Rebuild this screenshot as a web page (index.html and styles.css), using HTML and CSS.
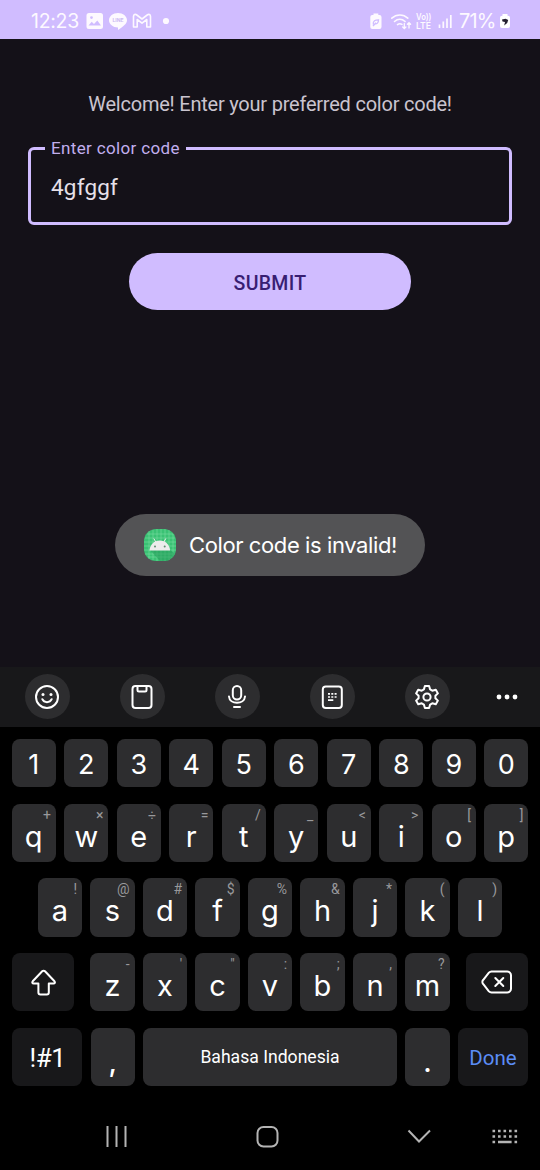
FILE: index.html
```html
<!DOCTYPE html>
<html lang="en">
<head>
<meta charset="utf-8">
<title>Color code</title>
<link rel="stylesheet" href="styles.css">
</head>
<body>
<div class="phone">
  <header class="status">
    <span class="clock">12:23</span>
    <svg class="status-left" width="90" height="24" viewBox="83 9 90 24">
      <path fill="#fdf9ff" fill-rule="evenodd" d="M89 13h11.500a2.500 2.500 0 0 1 2.500 2.500v11a2.500 2.500 0 0 1-2.500 2.500H89a2.500 2.500 0 0 1-2.500-2.500v-11A2.500 2.500 0 0 1 89 13zM88.500 25.500h12.500l-3.700-5-3.300 3.500-2.300-2.300zM91.500 16.200a1.400 1.400 0 1 0 0 2.800 1.400 1.400 0 0 0 0-2.800z"/>
      <path fill="#fdf9ff" d="M118 13c5 0 9 3.200 9 7.200 0 3.300-3.700 6.400-9 9.800v-2.600c-5 0-9-3.200-9-7.200s4-7.200 9-7.200z"/>
      <text x="118" y="22.300" class="line-word" text-anchor="middle">LINE</text>
      <path fill="none" stroke="#fdf9ff" stroke-width="1.600" stroke-linejoin="round" d="M133.500 27V16.500c0-2 1.700-2.700 3.300-1.500l5.200 4 5.200-4c1.600-1.200 3.300-.5 3.300 1.500V27h-3.700v-7.500l-4.800 3.700-4.800-3.700V27z"/>
      <circle cx="166" cy="21" r="3.100" fill="#fdf9ff"/>
    </svg>
    <svg class="status-right" width="88" height="24" viewBox="368 9 88 24">
      <path fill="#fdf9ff" d="M373.500 13.500h4.800v1.600h1.200a2 2 0 0 1 2 2V27a2 2 0 0 1-2 2h-7.200a2 2 0 0 1-2-2v-9.900a2 2 0 0 1 2-2h1.200z"/>
      <path fill="none" stroke="#cfbcff" stroke-width="1.300" d="M373.300 24.500c-.5-4 2-4.500 5.200-4.700 0 3-1.500 4.500-4 4M373 26l3-3.300"/>
      <g fill="none" stroke="#fdf9ff" stroke-width="1.600" stroke-linecap="round">
        <path d="M391.800 18.200c4.800-4.200 11.500-4.200 16 0M394.500 21.500c3.200-2.800 7.400-2.800 10.600 0M397.500 24.600c1.500-1.100 3-1.100 4.500-.2"/>
        <path stroke-width="1.300" d="M404.300 23.500v5m-1.600-1.500 1.600 1.600 1.600-1.600M409 28v-5.200m-1.600 1.500 1.600-1.600 1.600 1.600"/>
      </g>
      <text x="416" y="20" class="volte" textLength="15.500" lengthAdjust="spacingAndGlyphs">Vo))</text>
      <text x="416" y="29" class="volte" textLength="15" lengthAdjust="spacingAndGlyphs">LTE</text>
      <path stroke="#fdf9ff" stroke-width="1.700" d="M439.500 28v-3.500M443.300 28v-6.500M447 28v-9.500M450.800 28V15"/>
    </svg>
    <span class="percent">71%</span>
    <svg width="12" height="17" viewBox="0 0 12 17">
      <path fill="#fff" d="M3.500 1h5v1.700H9a2 2 0 0 1 2 2V13a2 2 0 0 1-2 2H3a2 2 0 0 1-2-2V4.700a2 2 0 0 1 2-2h.5z"/>
      <path fill="#252030" d="M3 6.500l3.500-.8 2.700 1.200-1 3.200-3 2.300.8-3.400-2.500-.5z"/>
    </svg>
  </header>

  <main class="app">
    <p class="welcome">Welcome! Enter your preferred color code!</p>
    <fieldset class="field">
      <legend>Enter color code</legend>
      <div class="value">4gfggf</div>
    </fieldset>
    <button class="submit">SUBMIT</button>
    <div class="toast">
      <svg width="32" height="32" viewBox="0 0 32 32">
        <rect width="32" height="32" rx="12" fill="#3ac274"/>
        <path stroke="#7bdba2" stroke-width=".6" d="M5 2v28M9 1v30M13 0v32M17 0v32M21 0v32M25 1v30M29 5v22M1 9h30M0 13h32M0 17h32M0 21h32M1 25h30M3 5h26M4 28h24"/>
        <path fill="#259b59" d="M6 21h20l5.500 4-7 6.500-8.500.5z" opacity=".55"/>
        <path fill="#ececec" d="M5.500 21.500c.5-6 4.700-10 10.300-10s9.800 4 10.300 10z"/>
        <path stroke="#ececec" stroke-width="1" d="M9.800 9.500l2 3.500M21.800 9.500l-2 3.500"/>
        <circle cx="11" cy="17.500" r="1" fill="#5d8c70"/><circle cx="20.700" cy="17.500" r="1" fill="#5d8c70"/>
      </svg>
      <span>Color code is invalid!</span>
    </div>
  </main>

  <section class="keyboard">
    <div class="tools">
      <div class="tool"><svg width="30" height="30" viewBox="0 0 30 30"><circle cx="15" cy="15" r="11"/><path d="M10.300 17.200c1.800 4 7.600 4 9.400 0"/><g class="solid"><circle cx="11" cy="12.500" r="1.500"/><circle cx="19" cy="12.500" r="1.500"/></g></svg></div>
      <div class="tool"><svg width="30" height="30" viewBox="0 0 30 30"><rect x="5.500" y="4" width="19" height="22" rx="3"/><path d="M10.500 4v4a1.500 1.500 0 0 0 1.500 1.500h6A1.500 1.500 0 0 0 19.500 8V4"/></svg></div>
      <div class="tool"><svg width="30" height="30" viewBox="0 0 30 30"><rect x="10.800" y="4" width="8.400" height="13.500" rx="4.200"/><path d="M7 14.500c.5 8.300 15.500 8.300 16 0M12 25h6"/></svg></div>
      <div class="tool"><svg width="30" height="30" viewBox="0 0 30 30"><rect x="5.800" y="4.500" width="19" height="21.500" rx="3"/><path class="fine" d="M11 11.800h2m1.300 0h2m1.300 0h2M11 15h2m1.300 0h2m1.300 0h2M11 18.200h5.300"/></svg></div>
      <div class="tool"><svg width="30" height="30" viewBox="0 0 30 30"><circle cx="15" cy="15" r="3.600"/><path d="M12.900 4h4.200l1 3.400 2.200 1.300 3.500-.9 2.100 3.600-2.500 2.400v2.400l2.500 2.400-2.100 3.600-3.500-.9-2.200 1.300-1 3.400h-4.200l-1-3.400-2.200-1.300-3.500.9-2.100-3.600 2.500-2.400v-2.400l-2.500-2.400 2.100-3.600 3.500.9 2.200-1.300z"/></svg></div>
      <svg class="more" width="24" height="8" viewBox="0 0 24 8"><circle cx="4" cy="4" r="2.400"/><circle cx="12" cy="4" r="2.400"/><circle cx="20" cy="4" r="2.400"/></svg>
    </div>

    <div class="rows">
      <div class="row digits">
        <div class="key">1</div><div class="key">2</div><div class="key">3</div><div class="key">4</div><div class="key">5</div><div class="key">6</div><div class="key">7</div><div class="key">8</div><div class="key">9</div><div class="key">0</div>
      </div>
      <div class="row">
        <div class="key"><i>+</i><b>q</b></div><div class="key"><i>×</i><b>w</b></div><div class="key"><i>÷</i><b>e</b></div><div class="key"><i>=</i><b>r</b></div><div class="key"><i>/</i><b>t</b></div><div class="key"><i>_</i><b>y</b></div><div class="key"><i>&lt;</i><b>u</b></div><div class="key"><i>&gt;</i><b>i</b></div><div class="key"><i>[</i><b>o</b></div><div class="key"><i>]</i><b>p</b></div>
      </div>
      <div class="row">
        <div class="key"><i>!</i><b>a</b></div><div class="key"><i>@</i><b>s</b></div><div class="key"><i>#</i><b>d</b></div><div class="key"><i>$</i><b>f</b></div><div class="key"><i>%</i><b>g</b></div><div class="key"><i>&amp;</i><b>h</b></div><div class="key"><i>*</i><b>j</b></div><div class="key"><i>(</i><b>k</b></div><div class="key"><i>)</i><b>l</b></div>
      </div>
      <div class="row">
        <div class="key dark shift"><svg width="27" height="27" viewBox="0 0 27 27"><path d="M12.200 2.300a1.900 1.900 0 0 1 2.800 0l9.500 10c.9 1 .4 2.200-1 2.200h-4.700v8.900a2 2 0 0 1-2 2h-6.400a2 2 0 0 1-2-2v-8.900H3.700c-1.400 0-1.900-1.200-1-2.200z"/></svg></div>
        <div class="key"><i>-</i><b>z</b></div><div class="key"><i>'</i><b>x</b></div><div class="key"><i>"</i><b>c</b></div><div class="key"><i>:</i><b>v</b></div><div class="key"><i>;</i><b>b</b></div><div class="key"><i>,</i><b>n</b></div><div class="key"><i>?</i><b>m</b></div>
        <div class="key dark back"><svg width="32" height="26" viewBox="0 0 32 26"><path d="M10.500 2.500h15.700a3.800 3.800 0 0 1 3.800 3.800v13.400a3.800 3.800 0 0 1-3.800 3.800H10.500a4 4 0 0 1-2.600-1.100L2.300 15.200a3 3 0 0 1 0-4.400l5.600-7.200a4 4 0 0 1 2.600-1.100z"/><path d="M14.300 9l8 8m0-8l-8 8"/></svg></div>
      </div>
      <div class="row">
        <div class="key dark wide symbols">!#1</div><div class="key punct">,</div><div class="key space">Bahasa Indonesia</div><div class="key punct">.</div><div class="key dark wide done">Done</div>
      </div>
    </div>
  </section>

  <nav class="nav">
    <svg width="540" height="84" viewBox="0 1086 540 84">
      <g fill="none" stroke="#b4b4b4" stroke-width="2">
        <path d="M107.500 1126v21M116.500 1126v21M125.500 1126v21"/>
        <rect x="257.500" y="1127" width="20" height="19.500" rx="6"/>
        <path d="M408.500 1130.500l10.500 11 11-11"/>
        <path stroke-width="2.600" d="M492.500 1131h2.600m2.900 0h2.600m2.900 0h2.600m2.900 0h2.600m2.900 0h2.600M492.500 1136.500h2.600m2.900 0h2.600m2.900 0h2.600m2.900 0h2.600m2.900 0h2.600M492.500 1142h2.600m2.900 0h13.600m2.900 0h2.600"/>
      </g>
    </svg>
  </nav>
</div>
</body>
</html>
```
FILE: styles.css
```css
* { box-sizing: border-box; }
body { margin: 0; background: #000; }
.phone {
  width: 540px; height: 1170px; display: flex; flex-direction: column;
  overflow: hidden; font-family: Roboto, sans-serif; color: #fff; background: #000;
}
svg { display: block; flex: none; }

.status {
  height: 38.500px; flex: none; background: #d0bcff; display: flex; align-items: center;
  padding: 4px 0 0 31px; font-family: Inter, sans-serif; color: #fdf9ff;
}
.clock { font-size: 19.500px; width: 52px; white-space: nowrap; letter-spacing: -.3px; }
.status-right { margin-left: 195px; }
.percent { font-size: 20px; width: 43px; padding-left: 3px; letter-spacing: -.8px; }
.line-word { font: 700 5px Inter, sans-serif; fill: #cbb8f2; }
.volte { font: 600 9px Inter, sans-serif; fill: #fdf9ff; }

.app {
  height: 628.500px; flex: none; background: #141118; display: flex; flex-direction: column;
  align-items: center; padding-top: 53px;
}
.welcome { margin: 0; font-size: 20px; line-height: 24px; color: #cac4cf; white-space: nowrap; letter-spacing: -.22px; }
.field {
  width: 484px; height: 88px; margin: 21.500px 0 0; padding: 0 0 0 14px; border: 3px solid #d0bcff;
  border-radius: 6px; min-width: 0;
}
.field legend { padding: 0 6px; font-size: 17px; line-height: 22px; color: #c2afee; letter-spacing: .35px; }
.value { padding-left: 6px; margin-top: 15px; font-size: 22.500px; line-height: 26px; color: #e6e0e9; letter-spacing: .2px; }
.submit {
  width: 282px; height: 57px; margin: 28px 0 0; padding: 3px 0 0; border: 0; border-radius: 29px;
  background: #d0bcff; color: #381e72; font: 500 19.500px Roboto, sans-serif; letter-spacing: .3px;
}
.toast {
  width: 310px; height: 62px; margin-top: 203.500px; border-radius: 31px; background: #535355;
  display: flex; align-items: center; gap: 13px; padding-left: 29px;
  font: 22px Inter, sans-serif; white-space: nowrap; letter-spacing: -.4px;
}

.tools {
  height: 60px; background: #18181a; display: flex; align-items: center; gap: 50px;
  padding: 0 20px 1px 24.500px;
}
.tool { width: 45px; height: 45px; border-radius: 50%; background: #2d2d2f; display: grid; place-items: center; flex: none; }
.tool svg, .key svg { fill: none; stroke: #fff; stroke-width: 2; stroke-linejoin: round; stroke-linecap: round; }
.tool .solid { fill: #fff; stroke: none; }
.tool .fine { stroke-width: 1.700; stroke-linecap: butt; }
.more { fill: #fff; margin-left: -5px; }

.rows { display: flex; flex-direction: column; gap: 16.500px; padding: 12px 11.500px 0; }
.row { display: flex; justify-content: center; gap: 8.250px; }
.key {
  width: 44.250px; height: 58.250px; flex: none; border-radius: 8px; background: #2d2d2f;
  display: flex; flex-direction: column; font-family: Inter, sans-serif;
}
.digits .key { height: 48px; align-items: center; justify-content: center; font-size: 27px; padding-top: 2px; }
.key i { height: 16px; padding: 3px 5px 0 0; text-align: right; font: normal 14px/16px Roboto, sans-serif; color: #99999b; }
.key b { font-weight: 400; font-size: 29px; line-height: 34px; text-align: center; }
.key.dark { background: #18181a; align-items: center; justify-content: center; }
.shift { width: 62.500px; margin-right: 7.750px; }
.back { width: 62.500px; margin-left: 7.750px; }
.wide { width: 70.500px; }
.symbols { font-size: 26px; font-family: Roboto, sans-serif; letter-spacing: -.4px; padding: 2px 0 0 1px; }
.punct { align-items: center; justify-content: flex-end; font-size: 28px; line-height: 36px; padding-bottom: 6px; font-weight: 500; }
.space { width: 254px; align-items: center; justify-content: center; font: 17.600px Roboto, sans-serif; padding-top: 1px; }
.key.done { font: 20.500px Roboto, sans-serif; color: #5b8df6; padding-top: 2px; }
```
